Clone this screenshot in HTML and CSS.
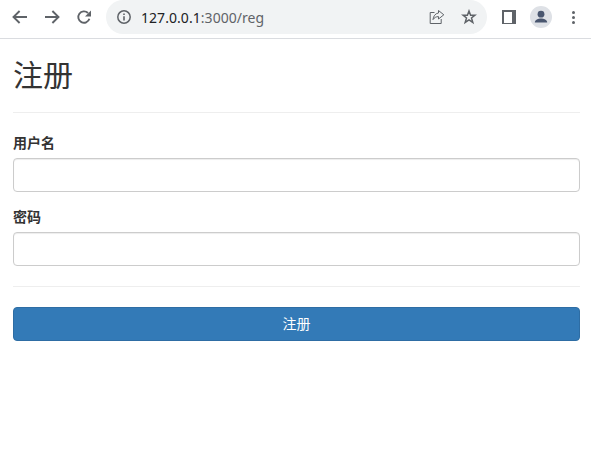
FILE: index.html
```html
<!DOCTYPE html>
<html lang="zh-CN">
<head>
    <meta charset="UTF-8">
    <meta name="viewport" content="width=device-width, initial-scale=1.0">
    <title>注册</title>
    <link rel="stylesheet" href="styles.css">
</head>
<body>
    <div class="toolbar">
        <div class="nav-buttons">
            <svg class="icon" viewBox="0 0 16 16"><path d="M15 8H2M7.600 2 1.500 8l6.100 6" fill="none" stroke="#5f6368" stroke-width="1.900"/></svg>
            <svg class="icon" viewBox="0 0 16 16"><path d="M1 8h13M8.400 2l6.100 6-6.100 6" fill="none" stroke="#5f6368" stroke-width="1.900"/></svg>
            <svg class="icon" viewBox="0 0 16 16"><path d="M13.400 9.800A5.700 5.700 0 1 1 12 4" fill="none" stroke="#5f6368" stroke-width="1.900"/><path d="M15 1.500v6H9z" fill="#5f6368"/></svg>
        </div>
        <div class="omnibox">
            <svg class="info-icon" viewBox="0 0 14 14"><circle cx="7" cy="7" r="6.200" fill="none" stroke="#5f6368" stroke-width="1.500"/><path d="M6.200 6.200h1.600v4.200H6.200zM6.200 3.400h1.600v1.700H6.200z" fill="#5f6368"/></svg>
            <div class="url"><span class="host">127.0.0.1</span>:3000/reg</div>
            <svg class="share-icon" viewBox="0 0 16 16"><path d="M5.500 3.500H1.200v11h11V10" fill="none" stroke="#5f6368" stroke-width="1"/><path d="M9.500 1.500 14.800 5.800 9.500 10V7.600C7 7.600 5.300 8.600 4 10.600 4.300 7.300 6.200 4.400 9.500 4z" fill="none" stroke="#5f6368" stroke-width="1"/></svg>
            <svg class="star-icon" viewBox="0 0 16 16"><path d="M8 2 9.600 6.200h4.400l-3.500 2.800 1.300 4.400L8 10.900l-3.800 2.500 1.300-4.400L2 6.200h4.400z" fill="none" stroke="#5f6368" stroke-width="1.500"/></svg>
        </div>
        <div class="tool-buttons">
            <div class="side-panel"><div class="side-panel-inner"></div></div>
            <div class="avatar">
                <svg viewBox="0 0 22 22" width="22" height="22"><circle cx="11" cy="8.200" r="3.400" fill="#49566f"/><path d="M4.800 16.500c0-2.800 3.600-4 6.200-4s6.200 1.200 6.200 4z" fill="#49566f"/></svg>
            </div>
            <div class="menu-dots"><span></span><span></span><span></span></div>
        </div>
    </div>
    <div class="container">
        <h1 class="page-title">注册</h1>
        <form class="reg-form">
            <div class="form-group">
                <label class="form-label" for="username">用户名</label>
                <input class="form-input" id="username" type="text">
            </div>
            <div class="form-group">
                <label class="form-label" for="password">密码</label>
                <input class="form-input" id="password" type="password">
            </div>
            <div class="form-actions">
                <button class="btn" type="submit">注册</button>
            </div>
        </form>
    </div>
</body>
</html>
```

FILE: styles.css
```css
body {
    margin: 0;
    background-color: #fff;
    color: #333;
    font-family: "Liberation Sans", "Noto Sans CJK SC", sans-serif;
    font-size: 14px;
}
.toolbar {
    display: flex;
    align-items: flex-start;
    height: 38px;
    border-bottom: 1px solid #dadce0;
    box-sizing: content-box;
}
.nav-buttons {
    display: flex;
    gap: 16px;
    width: 106px;
    padding: 9px 0 0 12px;
    box-sizing: border-box;
}
.icon {
    width: 16px;
    height: 16px;
}
.omnibox {
    display: flex;
    align-items: center;
    width: 381px;
    height: 34px;
    padding: 0 10px 0 11px;
    box-sizing: border-box;
    background-color: #f1f3f4;
    border-radius: 17px;
}
.info-icon {
    width: 14px;
    height: 14px;
    margin-right: 10px;
}
.url {
    flex: 1;
    font-family: "Noto Sans", "Liberation Sans", sans-serif;
    font-size: 14px;
    letter-spacing: 0.05px;
    color: #5f6368;
}
.host {
    color: #202124;
}
.share-icon {
    width: 16px;
    height: 16px;
    margin-right: 16px;
}
.star-icon {
    width: 16px;
    height: 16px;
}
.tool-buttons {
    display: flex;
    align-items: center;
    height: 34px;
    padding-left: 15px;
}
.side-panel {
    width: 14px;
    height: 14px;
    background-color: #5f6368;
}
.side-panel-inner {
    width: 8px;
    height: 11px;
    margin: 1.5px 0 0 1.5px;
    background-color: #fff;
}
.avatar {
    width: 22px;
    height: 22px;
    margin-left: 14px;
    border-radius: 50%;
    background-color: #dee1e6;
}
.menu-dots {
    display: flex;
    flex-direction: column;
    gap: 2px;
    margin-left: 20px;
}
.menu-dots span {
    width: 3px;
    height: 3px;
    border-radius: 50%;
    background-color: #5f6368;
}
.container {
    padding: 0 11px 0 13px;
}
.page-title {
    margin: 0;
    height: 73px;
    border-bottom: 1px solid #eee;
    font-size: 30px;
    font-weight: 400;
    line-height: 73px;
}
.reg-form {
    padding-top: 20px;
}
.form-group {
    margin-bottom: 15px;
}
.form-label {
    display: block;
    margin-bottom: 5px;
    font-weight: 700;
    line-height: 20px;
}
.form-input {
    display: block;
    width: 100%;
    height: 34px;
    box-sizing: border-box;
    border: 1px solid #ccc;
    border-radius: 4px;
    background-color: #fff;
    box-shadow: inset 0 1px 1px rgba(0, 0, 0, 0.075);
}
.form-actions {
    margin-top: 20px;
    padding-top: 20px;
    border-top: 1px solid #eee;
}
.btn {
    display: block;
    width: 100%;
    height: 34px;
    padding: 0 0 2px;
    border: 1px solid #2e6da4;
    border-radius: 4px;
    background-color: #337ab7;
    color: #fff;
    font-family: inherit;
    font-size: 14px;
    cursor: pointer;
}
```
